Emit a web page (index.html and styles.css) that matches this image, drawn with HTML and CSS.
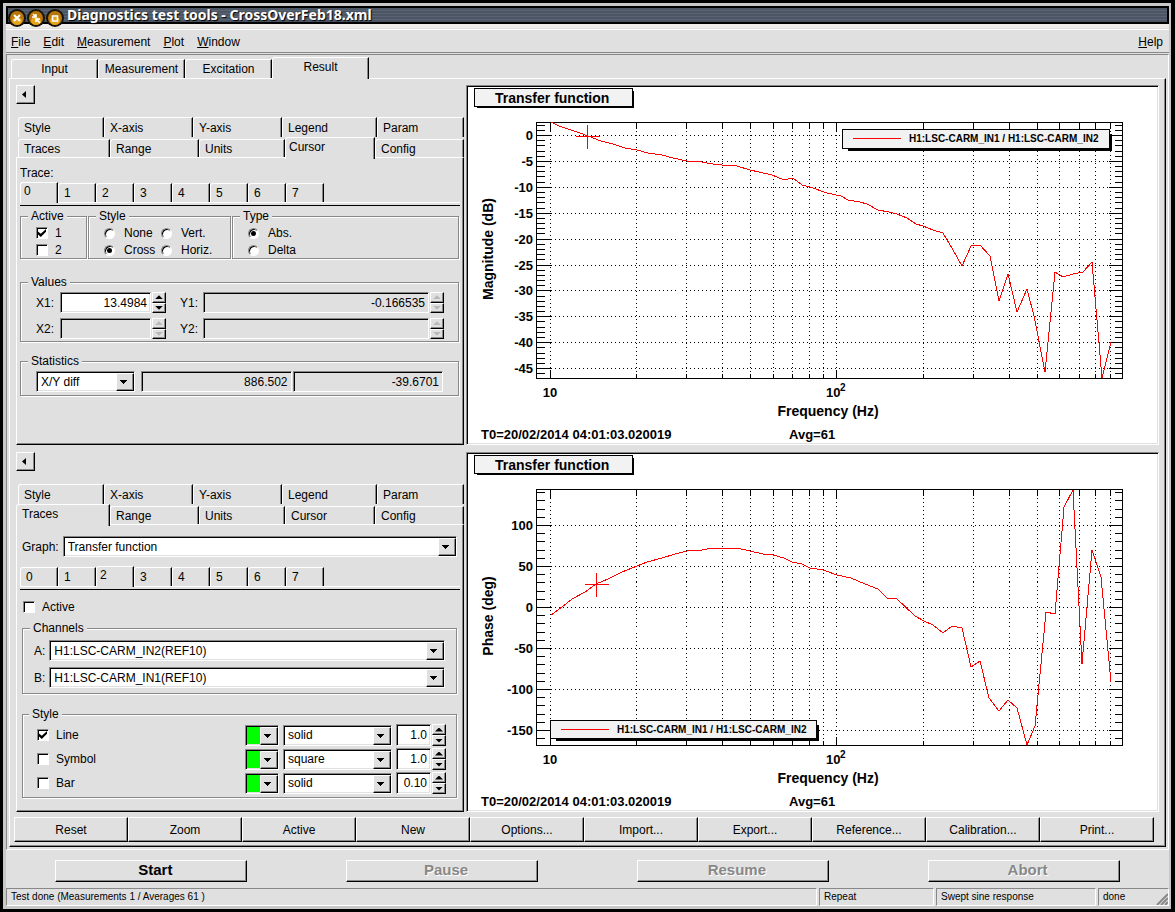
FILE: index.html
```html
<!DOCTYPE html>
<html lang="en">
<head>
    <meta charset="UTF-8">
    <meta name="viewport" content="width=device-width, initial-scale=1.0">
    <title>Diagnostics test tools - CrossOverFeb18.xml</title>
    <link rel="stylesheet" href="styles.css">
</head>
<body>
<div class="window">
    <header class="titlebar">
        <div class="orbs">
            <svg class="orb" viewBox="0 0 19 19"><circle cx="9" cy="9" r="9" fill="#1a1408"/><circle cx="9" cy="9" r="7" fill="#b87808"/><ellipse cx="9" cy="12" rx="5" ry="4" fill="#e8a418"/><path d="M6 6l6 6M12 6l-6 6" stroke="#fff" stroke-width="2"/></svg>
            <svg class="orb" viewBox="0 0 19 19"><circle cx="9" cy="9" r="9" fill="#1a1408"/><circle cx="9" cy="9" r="7" fill="#b87808"/><ellipse cx="9" cy="12" rx="5" ry="4" fill="#e8a418"/><path d="M6 5l3 3M5 8h4V5M9 13v-3h4M10 11l3 3" stroke="#fff" stroke-width="1.6" fill="none"/></svg>
            <svg class="orb" viewBox="0 0 19 19"><circle cx="9" cy="9" r="9" fill="#1a1408"/><circle cx="9" cy="9" r="7" fill="#b87808"/><ellipse cx="9" cy="12" rx="5" ry="4" fill="#e8a418"/><path d="M6.500 7h5v5h-5z" stroke="#fff" stroke-width="1.600" fill="none"/></svg>
        </div>
        <h1>Diagnostics test tools - CrossOverFeb18.xml</h1>
    </header>

    <nav class="menubar">
        <button><u>F</u>ile</button>
        <button><u>E</u>dit</button>
        <button><u>M</u>easurement</button>
        <button><u>P</u>lot</button>
        <button><u>W</u>indow</button>
        <button class="help"><u>H</u>elp</button>
    </nav>

    <main class="notebook">
        <div class="tabs main-tabs">
            <button class="tab">Input</button>
            <button class="tab">Measurement</button>
            <button class="tab">Excitation</button>
            <button class="tab selected">Result</button>
        </div>

        <div class="page">
            <div class="plots">
                <!-- Upper pad -->
                <section class="options">
                    <button class="collapse" aria-label="Hide options"></button>
                    <div class="tabs back-tabs">
                        <button class="tab">Style</button>
                        <button class="tab">X-axis</button>
                        <button class="tab">Y-axis</button>
                        <button class="tab">Legend</button>
                        <button class="tab">Param</button>
                    </div>
                    <div class="tabs front-tabs">
                        <button class="tab">Traces</button>
                        <button class="tab">Range</button>
                        <button class="tab">Units</button>
                        <button class="tab selected">Cursor</button>
                        <button class="tab">Config</button>
                    </div>
                    <div class="panel cursor-panel">
                        <div class="caption">Trace:</div>
                        <div class="tabs trace-tabs">
                            <button class="tab selected">0</button>
                            <button class="tab">1</button>
                            <button class="tab">2</button>
                            <button class="tab">3</button>
                            <button class="tab">4</button>
                            <button class="tab">5</button>
                            <button class="tab">6</button>
                            <button class="tab">7</button>
                        </div>
                        <div class="cursor-groups">
                            <fieldset>
                                <legend>Active</legend>
                                <label class="choice"><input type="checkbox" checked>1</label>
                                <label class="choice"><input type="checkbox">2</label>
                            </fieldset>
                            <fieldset class="two-cols">
                                <legend>Style</legend>
                                <label class="choice"><input type="radio" name="cursor-style">None</label>
                                <label class="choice"><input type="radio" name="cursor-style">Vert.</label>
                                <label class="choice"><input type="radio" name="cursor-style" checked>Cross</label>
                                <label class="choice"><input type="radio" name="cursor-style">Horiz.</label>
                            </fieldset>
                            <fieldset>
                                <legend>Type</legend>
                                <label class="choice"><input type="radio" name="cursor-type" checked>Abs.</label>
                                <label class="choice"><input type="radio" name="cursor-type">Delta</label>
                            </fieldset>
                        </div>
                        <fieldset class="values">
                            <legend>Values</legend>
                            <label for="x1">X1:</label>
                            <div class="spin"><input type="text" id="x1" value="13.4984"><span class="arrows"><button class="up" aria-label="Up"></button><button class="down" aria-label="Down"></button></span></div>
                            <label for="y1">Y1:</label>
                            <div class="spin"><input type="text" id="y1" value="-0.166535" readonly><span class="arrows"><button class="up" aria-label="Up" disabled></button><button class="down" aria-label="Down" disabled></button></span></div>
                            <label for="x2">X2:</label>
                            <div class="spin"><input type="text" id="x2" readonly><span class="arrows"><button class="up" aria-label="Up" disabled></button><button class="down" aria-label="Down" disabled></button></span></div>
                            <label for="y2">Y2:</label>
                            <div class="spin"><input type="text" id="y2" readonly><span class="arrows"><button class="up" aria-label="Up" disabled></button><button class="down" aria-label="Down" disabled></button></span></div>
                        </fieldset>
                        <fieldset class="statistics">
                            <legend>Statistics</legend>
                            <div class="combo"><select aria-label="Statistics"><option>X/Y diff</option></select></div>
                            <div class="results">
                                <input type="text" aria-label="X result" value="886.502" readonly>
                                <input type="text" aria-label="Y result" value="-39.6701" readonly>
                            </div>
                        </fieldset>
                    </div>
                </section>
                <div class="canvas"><svg id="magnitude" viewBox="0 0 689 356"></svg></div>

                <!-- Lower pad -->
                <section class="options">
                    <button class="collapse" aria-label="Hide options"></button>
                    <div class="tabs back-tabs">
                        <button class="tab">Style</button>
                        <button class="tab">X-axis</button>
                        <button class="tab">Y-axis</button>
                        <button class="tab">Legend</button>
                        <button class="tab">Param</button>
                    </div>
                    <div class="tabs front-tabs">
                        <button class="tab selected">Traces</button>
                        <button class="tab">Range</button>
                        <button class="tab">Units</button>
                        <button class="tab">Cursor</button>
                        <button class="tab">Config</button>
                    </div>
                    <div class="panel traces-panel">
                        <div class="field graph-field">
                            <label for="graph">Graph:</label>
                            <div class="combo"><select id="graph"><option>Transfer function</option></select></div>
                        </div>
                        <div class="tabs trace-tabs">
                            <button class="tab">0</button>
                            <button class="tab">1</button>
                            <button class="tab selected">2</button>
                            <button class="tab">3</button>
                            <button class="tab">4</button>
                            <button class="tab">5</button>
                            <button class="tab">6</button>
                            <button class="tab">7</button>
                        </div>
                        <label class="choice active-choice"><input type="checkbox">Active</label>
                        <fieldset class="channels">
                            <legend>Channels</legend>
                            <div class="field">
                                <label for="channel-a">A:</label>
                                <div class="combo"><select id="channel-a"><option>H1:LSC-CARM_IN2(REF10)</option></select></div>
                            </div>
                            <div class="field">
                                <label for="channel-b">B:</label>
                                <div class="combo"><select id="channel-b"><option>H1:LSC-CARM_IN1(REF10)</option></select></div>
                            </div>
                        </fieldset>
                        <fieldset class="draw-style">
                            <legend>Style</legend>
                            <div class="style-row">
                                <label class="choice"><input type="checkbox" checked>Line</label>
                                <button class="combo color" aria-label="Line color"></button>
                                <div class="combo"><select aria-label="Line style"><option>solid</option></select></div>
                                <div class="spin"><input type="text" aria-label="Line width" value="1.0"><span class="arrows"><button class="up" aria-label="Up"></button><button class="down" aria-label="Down"></button></span></div>
                            </div>
                            <div class="style-row">
                                <label class="choice"><input type="checkbox">Symbol</label>
                                <button class="combo color" aria-label="Symbol color"></button>
                                <div class="combo"><select aria-label="Symbol style"><option>square</option></select></div>
                                <div class="spin"><input type="text" aria-label="Symbol size" value="1.0"><span class="arrows"><button class="up" aria-label="Up"></button><button class="down" aria-label="Down"></button></span></div>
                            </div>
                            <div class="style-row">
                                <label class="choice"><input type="checkbox">Bar</label>
                                <button class="combo color" aria-label="Bar color"></button>
                                <div class="combo"><select aria-label="Bar style"><option>solid</option></select></div>
                                <div class="spin"><input type="text" aria-label="Bar width" value="0.10"><span class="arrows"><button class="up" aria-label="Up"></button><button class="down" aria-label="Down"></button></span></div>
                            </div>
                        </fieldset>
                    </div>
                </section>
                <div class="canvas"><svg id="phase" viewBox="0 0 689 356"></svg></div>
            </div>

            <div class="plot-buttons">
                <button>Reset</button>
                <button>Zoom</button>
                <button>Active</button>
                <button>New</button>
                <button>Options...</button>
                <button>Import...</button>
                <button>Export...</button>
                <button>Reference...</button>
                <button>Calibration...</button>
                <button>Print...</button>
            </div>
        </div>
    </main>

    <div class="actions">
        <button>Start</button>
        <button disabled>Pause</button>
        <button disabled>Resume</button>
        <button disabled>Abort</button>
    </div>

    <footer class="statusbar">
        <span>Test done (Measurements 1 / Averages 61 )</span>
        <span>Repeat</span>
        <span>Swept sine response</span>
        <span>done<svg class="grip" viewBox="0 0 12 12"><path d="M1 12L12 1M5 12L12 5M9 12L12 9" stroke="#888" stroke-width="2"/></svg></span>
    </footer>
</div>
<script src="chart.js"></script>
</body>
</html>
```
FILE: styles.css
```css
* {
    margin: 0;
    padding: 0;
    box-sizing: border-box;
}
body {
    background: black;
    padding: 3px 4px 3px 3px;
    font: 12px/14px "Liberation Sans", Arial, sans-serif;
    color: black;
}
button, input, select {
    font: inherit;
    color: inherit;
    border: none;
    border-radius: 0;
    background: none;
    outline: none;
}
.window {
    background: #e0e0e0;
    border: solid #c8c8c8;
    border-width: 3px 2px 3px 3px;
}

/* Title bar */
.titlebar {
    display: flex;
    align-items: center;
    height: 18px;
    border: 2px solid black;
    background: repeating-linear-gradient(#4c5563 0 2px, #5b6474 2px 3px);
}
.titlebar h1 {
    font: bold 14px/14px "Noto Sans", sans-serif;
    color: white;
    text-shadow: 1px 1px 1px black;
    margin-left: 2px;
    white-space: nowrap;
}
.orbs {
    display: flex;
    height: 14px;
}
.orb {
    width: 19px;
    height: 19px;
    margin-top: 1px;
    flex: none;
}

/* Menu */
.menubar {
    display: flex;
    gap: 13px;
    height: 29px;
    padding: 4px 6px 1px 5px;
    border-top: 4px solid #f0ecea;
    border-bottom: 1px solid #888;
    box-shadow: inset 0 1px 0 #e0e0e0, inset 0 2px 0 white;
    margin-bottom: 1px;
}
.help {
    margin-left: auto;
}

/* Tabs */
.tabs {
    display: flex;
    align-items: flex-end;
}
.tab {
    height: 19px;
    padding: 0 5px;
    text-align: left;
    background: #e0e0e0;
    border-top: 1px solid white;
    border-left: 1px solid white;
    border-right: 1px solid black;
    border-top-left-radius: 3px;
    box-shadow: inset -1px 0 0 #888;
}
.tab.selected {
    position: relative;
    height: 22px;
    margin-bottom: -1px;
    padding: 0 3px 4px;
}
.notebook {
    border: 1px solid;
    border-color: #888 white white #888;
    padding: 2px;
}
.main-tabs {
    height: 21px;
    padding-left: 2px;
}
.main-tabs .tab {
    min-width: 87px;
    text-align: center;
}
.main-tabs .selected {
    min-width: 97px;
}
.page {
    border: 1px solid;
    border-color: white black black white;
    box-shadow: inset -1px -1px 0 #888;
    padding: 6px 6px 4px;
}
.plots {
    display: grid;
    grid-template-columns: 448px 1fr;
    gap: 7px 2px;
}
.options {
    display: flex;
    flex-direction: column;
    min-height: 360px;
}
.collapse {
    width: 19px;
    height: 19px;
    margin-bottom: 13px;
    border: 1px solid;
    border-color: white black black white;
    box-shadow: inset -1px -1px 0 #888;
}
.collapse::before {
    content: "";
    display: block;
    width: 4px;
    height: 7px;
    margin-left: 5px;
    background: black;
    clip-path: polygon(100% 0, 100% 100%, 0 50%);
}
.back-tabs, .front-tabs {
    display: grid;
    padding-left: 2px;
}
.back-tabs {
    grid-template-columns: 86fr 89fr 89fr 95fr 87fr;
    height: 20px;
}
.front-tabs {
    grid-template-columns: 92fr 89fr 86fr 90fr 89fr;
    height: 20px;
}
.back-tabs .tab {
    height: 20px;
}
.front-tabs .selected:first-child {
    margin-left: -2px;
    padding-left: 5px;
}
.panel {
    flex: 1;
    border: 1px solid;
    border-color: white black black white;
    box-shadow: inset -1px -1px 0 #888;
}
.trace-tabs {
    height: 24px;
    padding-bottom: 3px;
    border-bottom: 1px solid black;
    background: linear-gradient(white, white) 0 20px / 100% 1px no-repeat;
}
.trace-tabs .tab {
    width: 38px;
}
.trace-tabs .tab.selected {
    height: 21px;
}

/* Group boxes */
fieldset {
    min-width: 0;
    border: 1px solid #888;
    box-shadow: 1px 1px 0 white, inset 1px 1px 0 white;
}
legend {
    margin-left: -8px;
    padding: 0 3px;
    background: #e0e0e0;
}
.choice {
    display: flex;
    align-items: center;
    height: 16px;
}
input[type="checkbox"], input[type="radio"] {
    appearance: none;
    flex: none;
    border: 1px solid;
    border-color: #888 white white #888;
    background: white;
    box-shadow: inset 1px 1px 0 black;
}
input[type="checkbox"] {
    width: 12px;
    height: 12px;
    margin-right: 7px;
}
input[type="checkbox"]:checked::before {
    content: "";
    display: block;
    width: 8px;
    height: 8px;
    margin: 1px;
    background: black;
    clip-path: polygon(0 30%, 35% 60%, 100% 0, 100% 35%, 35% 100%, 0 70%);
}
input[type="radio"] {
    width: 11px;
    height: 11px;
    margin-right: 9px;
    border-radius: 50%;
}
input[type="radio"]:checked::before {
    content: "";
    display: block;
    width: 5px;
    height: 5px;
    margin: 2px;
    border-radius: 50%;
    background: black;
}

/* Text, combo and number boxes */
input[type="text"], .combo {
    border: 1px solid;
    border-color: #888 white white #888;
    box-shadow: inset 1px 1px 0 black, inset -1px -1px 0 #e0e0e0;
    background: white;
    height: 21px;
}
input[type="text"] {
    width: 100%;
    min-width: 0;
    padding: 0 3px;
    text-align: right;
}
input[type="text"]:read-only {
    background: #e0e0e0;
}
.combo {
    position: relative;
    flex: 1;
}
.combo select {
    appearance: none;
    width: 100%;
    height: 19px;
    padding: 0 18px 0 4px;
}
.combo::after {
    content: "";
    position: absolute;
    top: 1px;
    right: 0;
    bottom: 0;
    width: 16px;
    border: 1px solid;
    border-color: white black black white;
    box-shadow: inset -1px -1px 0 #888;
    background: linear-gradient(black, black) 3px 6px / 7px 1px no-repeat,
        linear-gradient(black, black) 4px 7px / 5px 1px no-repeat,
        linear-gradient(black, black) 5px 8px / 3px 1px no-repeat,
        linear-gradient(black, black) 6px 9px / 1px 1px no-repeat,
        #e0e0e0;
    pointer-events: none;
}
.spin {
    display: flex;
    gap: 1px;
    min-width: 0;
}
.arrows {
    display: flex;
    flex: none;
    flex-direction: column;
    width: 14px;
}
.arrows button {
    flex: 1;
    display: flex;
    align-items: center;
    justify-content: center;
    border: 1px solid;
    border-color: white black black white;
    box-shadow: inset -1px -1px 0 #888;
}
.arrows button::before {
    content: "";
    width: 8px;
    height: 4px;
    background: black;
    clip-path: polygon(50% 0, 100% 100%, 0 100%);
}
.arrows .down::before {
    clip-path: polygon(0 0, 100% 0, 50% 100%);
}
.arrows button:disabled::before {
    background: #b8b8b8;
}

/* Cursor panel */
.cursor-panel {
    padding: 7px 3px 0;
}
.caption {
    height: 17px;
    line-height: 16px;
}
.cursor-groups {
    display: grid;
    grid-template-columns: 67px 143px 1fr;
    gap: 1px;
    margin: 3px 1px 0 0;
}
.cursor-groups fieldset {
    display: grid;
    gap: 1px;
    padding: 2px 0 0 15px;
}
.cursor-groups .two-cols {
    grid-template-columns: 56px 1fr;
}
.values {
    display: grid;
    grid-template-columns: 24px 106px 37px 1fr;
    row-gap: 5px;
    align-items: center;
    padding: 3px 14px 2px 15px;
    margin: 16px 1px 0 0;
}
.values label:nth-of-type(even) {
    margin-left: 14px;
}
.statistics {
    display: flex;
    padding: 3px 15px;
    margin: 12px 1px 0 0;
}
.statistics .combo {
    flex: 0 0 99px;
}
.results {
    flex: 1;
    display: flex;
    gap: 1px;
    margin-left: 6px;
}

/* Traces panel */
.traces-panel {
    padding: 11px 3px 0;
}
.field {
    display: flex;
    align-items: center;
    gap: 4px;
}
.graph-field {
    padding: 0 3px 0 2px;
    margin-bottom: 9px;
}
.active-choice {
    margin: 9px 3px 6px;
}
.channels, .draw-style {
    margin: 0 3px 0 2px;
}
.channels {
    display: grid;
    gap: 6px;
    padding: 5px 11px;
}
.channels legend {
    margin-left: -4px;
}
.draw-style {
    display: grid;
    gap: 2px;
    margin-top: 13px;
    padding: 3px 10px 3px 14px;
}
.style-row {
    display: grid;
    grid-template-columns: 1fr 34px 109px 50px;
    gap: 4px;
    align-items: center;
}
.style-row .spin input {
    height: 22px;
}
.combo.color {
    background: linear-gradient(#00ff00, #00ff00) 1px 1px / 16px 17px no-repeat, white;
}

/* Canvases */
.canvas {
    border: 1px solid;
    border-color: #888 white white #888;
    padding: 1px;
    box-shadow: inset 1px 1px 0 black, inset -1px -1px 0 #e0e0e0;
    align-self: start;
}
.canvas svg {
    display: block;
    width: 100%;
    background: white;
    font-family: "Liberation Sans", Arial, sans-serif;
    font-weight: bold;
}
.canvas path, .canvas rect, .canvas polyline {
    shape-rendering: crispEdges;
    fill: none;
    stroke: black;
}
.canvas .grid {
    stroke-dasharray: 1 3;
}
.canvas .trace {
    stroke: red;
}
.canvas .box {
    fill: #f2f2f2;
}
.canvas .shadow {
    fill: black;
}
.canvas .tick-text {
    font-size: 13px;
}
.canvas .axis-text {
    font-size: 14px;
}
.canvas .legend-text, .canvas .power {
    font-size: 10px;
}

/* Bottom rows */
.plot-buttons {
    display: grid;
    grid-template-columns: repeat(10, 1fr);
    margin: 5px 5px 0 -2px;
}
.plot-buttons button, .actions button {
    border: 1px solid;
    border-color: white black black white;
    box-shadow: inset -1px -1px 0 #888;
}
.plot-buttons button {
    height: 25px;
}
.actions {
    display: grid;
    grid-template-columns: repeat(4, 1fr);
    padding: 10px 0 6px;
}
.actions button {
    width: 66%;
    height: 22px;
    margin: 0 auto;
    padding: 0 0 2px 8px;
    font-size: 15px;
    font-weight: bold;
}
.actions button:disabled {
    color: #888;
    text-shadow: 1px 1px 0 white;
}
.statusbar {
    display: grid;
    grid-template-columns: 1fr 115px 160px 71px;
    gap: 2px;
    font-size: 10px;
    line-height: 16px;
}
.statusbar span {
    position: relative;
    padding-left: 4px;
    border: 1px solid;
    border-color: #888 white white #888;
}
.grip {
    position: absolute;
    right: 0;
    bottom: 0;
    width: 12px;
    height: 12px;
}
```
FILE: chart.js
```js
const NS = 'http://www.w3.org/2000/svg';

// Plot area inside the canvas
const left = 68, right = 654, top_ = 35, bottom = 291;
const decade = 286.8, x10 = 82, x900 = 642;

function add(svg, name, attrs, text) {
    const el = document.createElementNS(NS, name);
    for (const key in attrs) el.setAttribute(key, attrs[key]);
    if (text !== undefined) el.textContent = text;
    svg.appendChild(el);
    return el;
}

function line(svg, x1, y1, x2, y2, cls) {
    add(svg, 'path', { d: `M${x1 + 0.5} ${y1 + 0.5}L${x2 + 0.5} ${y2 + 0.5}`, class: cls || 'tick' });
}

function drawChart(id, opt) {
    const svg = document.getElementById(id);

    // Title box
    add(svg, 'rect', { x: 9.5, y: 4.5, width: 156, height: 16, class: 'shadow' });
    add(svg, 'rect', { x: 6.5, y: 1.5, width: 158, height: 18, class: 'box' });
    add(svg, 'text', { x: 27, y: 16, class: 'axis-text' }, 'Transfer function');

    // Log x axis
    for (let f = 10; f <= 900; f += f < 100 ? 10 : 100) {
        const x = Math.floor(x10 + decade * Math.log10(f / 10));
        const major = f === 10 || f === 100;
        line(svg, x, top_, x, bottom, 'grid');
        line(svg, x, top_, x, top_ + (major ? 9 : 6));
        line(svg, x, bottom, x, bottom - (major ? 9 : 5));
    }

    // Linear y axis
    for (let v = opt.first; v >= opt.last; v -= opt.step) {
        const y = Math.round(opt.zero - v * opt.scale);
        const major = v % (opt.step * 5) === 0;
        const len = major ? 14 : 8;
        line(svg, left, y, left + len, y);
        line(svg, right, y, right - len, y);
        if (major) {
            line(svg, x10, y, x900, y, 'grid');
            add(svg, 'text', { x: 65, y: y + 5, 'text-anchor': 'end', class: 'tick-text' }, v);
        }
    }
    add(svg, 'rect', { x: left + 0.5, y: top_ + 0.5, width: right - left, height: bottom - top_ });

    // Trace and its cursor
    add(svg, 'polyline', { points: opt.points, class: 'trace' });
    const [cx, cy] = opt.cursor;
    line(svg, cx - 12, cy, cx + 12, cy, 'trace');
    line(svg, cx, cy - 12, cx, cy + 12, 'trace');

    // Legend
    const { x, y, w, h } = opt.legend;
    add(svg, 'rect', { x: x + 6.5, y: y + 5.5, width: w - 4, height: h - 3, class: 'shadow' });
    add(svg, 'rect', { x: x + 0.5, y: y + 0.5, width: w, height: h, class: 'box' });
    line(svg, x + 10, y + 9, x + 58, y + 9, 'trace');
    add(svg, 'text', { x: x + 67, y: y + 13, class: 'legend-text' }, 'H1:LSC-CARM_IN1 / H1:LSC-CARM_IN2');

    // Axis titles and run info
    add(svg, 'text', { x: 82, y: 310, 'text-anchor': 'middle', class: 'tick-text' }, '10');
    add(svg, 'text', { x: 358, y: 310, class: 'tick-text' }, '10');
    add(svg, 'text', { x: 372, y: 304, class: 'power' }, '2');
    add(svg, 'text', { x: 360, y: 329, 'text-anchor': 'middle', class: 'axis-text' }, 'Frequency (Hz)');
    add(svg, 'text', { transform: 'translate(25 162) rotate(-90)', 'text-anchor': 'middle', class: 'axis-text' }, opt.label);
    add(svg, 'text', { x: 13, y: 352, class: 'tick-text' }, 'T0=20/02/2014 04:01:03.020019');
    add(svg, 'text', { x: 321, y: 352, class: 'tick-text' }, 'Avg=61');
}

drawChart('magnitude', {
    label: 'Magnitude (dB)',
    first: 2, last: -46, step: 1, zero: 48, scale: 5.18,
    cursor: [119, 49],
    legend: { x: 374, y: 42, w: 267, h: 19 },
    points: '83,35 91,39 112,46 120,49 133,54 145,57 157,61 169,63 180,66 194,68 205,71 219,74 234,75 239,76 245,77 ' +
        '254,78 269,79 282,83 304,88 316,93 320,92 325,91 334,98 342,100 359,106 373,109 380,113 392,115 399,117 ' +
        '410,123 421,125 429,127 439,131 448,137 455,139 465,143 475,146 485,163 494,179 503,159 512,158 522,169 ' +
        '531,214 540,187 549,225 559,202 566,229 577,285 587,185 595,190 605,187 615,185 624,175 634,291 643,255'
});

drawChart('phase', {
    label: 'Phase (deg)',
    first: 140, last: -160, step: 10, zero: 153, scale: 0.82,
    cursor: [128, 130],
    legend: { x: 82, y: 266, w: 266, h: 18 },
    points: '83,161 94,153 104,145 117,138 128,130 140,125 154,118 169,112 179,108 194,104 207,100 219,97 234,96 ' +
        '245,94 269,94 282,97 295,100 305,101 316,104 324,108 334,110 342,114 355,116 369,121 383,124 397,130 ' +
        '410,135 419,144 428,144 447,162 456,167 465,171 475,179 484,172 494,174 503,213 512,207 521,244 531,257 ' +
        '540,246 549,254 559,291 567,272 578,158 587,160 596,53 605,36 614,210 624,96 633,123 643,228'
});
```
